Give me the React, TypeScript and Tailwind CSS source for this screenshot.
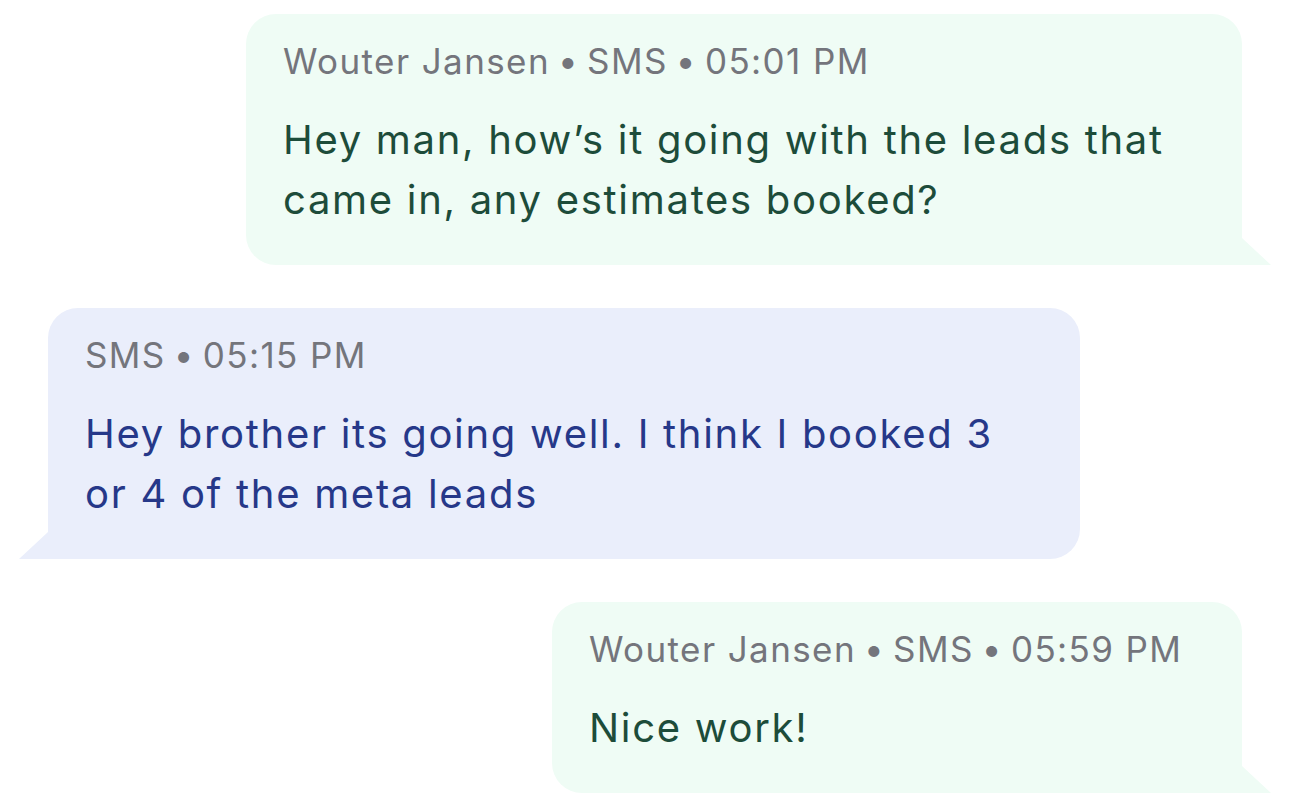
import React from "react";

type Msg = {
  id: number;
  meta: string[];
  text: string;
  outgoing: boolean;
  width: string;
};

const messages: Msg[] = [
  {
    id: 1,
    meta: ["Wouter Jansen", "SMS", "05:01 PM"],
    text: "Hey man, how\u2019s it going with the leads that came in, any estimates booked?",
    outgoing: true,
    width: "w-[996px]",
  },
  {
    id: 2,
    meta: ["SMS", "05:15 PM"],
    text: "Hey brother its going well. I think I booked 3 or 4 of the meta leads",
    outgoing: false,
    width: "w-[1032px]",
  },
  {
    id: 3,
    meta: ["Wouter Jansen", "SMS", "05:59 PM"],
    text: "Nice work!",
    outgoing: true,
    width: "w-[690px]",
  },
];

function Bubble({ msg }: { msg: Msg }) {
  const out = msg.outgoing;
  return (
    <div
      className={`relative ${msg.width} ${
        out
          ? "self-end bg-[#effcf5] rounded-[30px] rounded-br-none"
          : "self-start bg-[#eaeefb] rounded-[30px] rounded-bl-none"
      } pl-[37px] pr-[64px] pt-[22px] pb-[35px]`}
    >
      {/* tail */}
      <svg
        className={`absolute bottom-0 ${out ? "right-[-30px]" : "left-[-30px]"}`}
        width="30"
        height="27"
        viewBox="0 0 30 27"
      >
        {out ? (
          <polygon points="0,0 29,27 0,27" fill="#effcf5" />
        ) : (
          <polygon points="30,0 1,27 30,27" fill="#eaeefb" />
        )}
      </svg>

      <div className="text-[35px] leading-[50px] text-[#74757c] tracking-[1.4px] whitespace-nowrap">
        {msg.meta.map((m, i) => (
          <span key={i}>
            {i > 0 && <span className="mx-[8px]">•</span>}
            {m}
          </span>
        ))}
      </div>
      <p
        className={`mt-[24px] text-[40px] leading-[60px] tracking-[1.7px] ${
          out ? "text-[#1d4c3a]" : "text-[#263889]"
        }`}
      >
        {msg.text}
      </p>
    </div>
  );
}

export default function App() {
  return (
    <div
      className="w-[1290px] h-[800px] bg-white overflow-hidden flex flex-col gap-[43px] px-[48px] pt-[14px]"
      style={{ fontFamily: "Inter, 'Noto Sans', sans-serif" }}
    >
      {messages.map((m) => (
        <Bubble key={m.id} msg={m} />
      ))}
    </div>
  );
}
